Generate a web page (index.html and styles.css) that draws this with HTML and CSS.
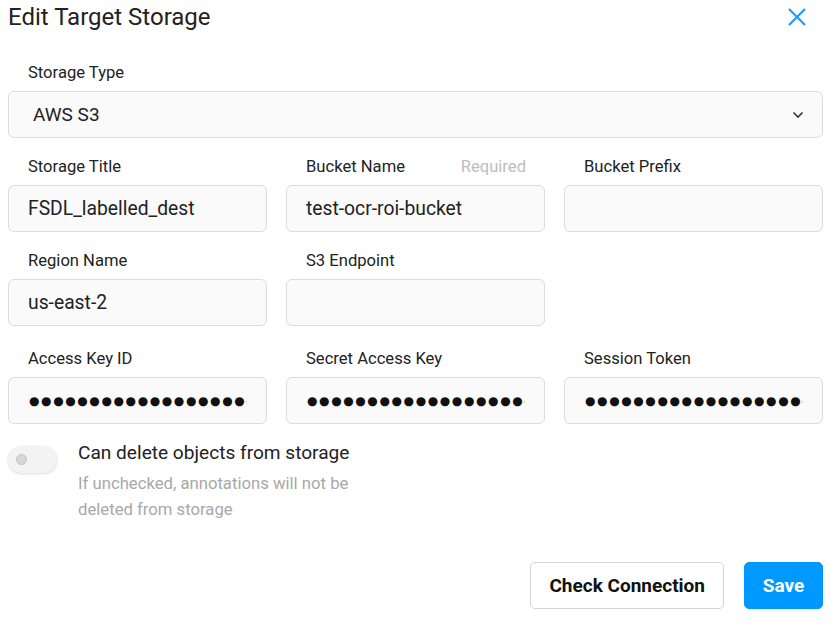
FILE: index.html
```html
<!DOCTYPE html>
<html>
<head>
<meta charset="utf-8">
<link rel="stylesheet" href="styles.css">
</head>
<body>
<div class="modal">
  <div class="header">
    <h1 class="title">Edit Target Storage</h1>
    <button class="close" aria-label="Close">
      <svg width="20" height="20" viewBox="0 0 20 20"><path d="M2 2L18 18M18 2L2 18" stroke="#1a9bff" stroke-width="2.2" fill="none"/></svg>
    </button>
  </div>

  <div class="field full">
    <div class="label">Storage Type</div>
    <div class="select">
      <span>AWS S3</span>
      <svg width="12" height="8" viewBox="0 0 12 8"><path d="M1.5 1.5L6 6L10.5 1.5" stroke="#333" stroke-width="1.6" fill="none"/></svg>
    </div>
  </div>

  <div class="grid">
    <div class="field">
      <div class="label">Storage Title</div>
      <input class="input" type="text" value="FSDL_labelled_dest">
    </div>
    <div class="field">
      <div class="label split"><span>Bucket Name</span><span class="req">Required</span></div>
      <input class="input" type="text" value="test-ocr-roi-bucket">
    </div>
    <div class="field">
      <div class="label">Bucket Prefix</div>
      <input class="input" type="text" value="">
    </div>
  </div>

  <div class="grid">
    <div class="field">
      <div class="label">Region Name</div>
      <input class="input" type="text" value="us-east-2">
    </div>
    <div class="field">
      <div class="label">S3 Endpoint</div>
      <input class="input" type="text" value="">
    </div>
  </div>

  <div class="grid row3">
    <div class="field">
      <div class="label">Access Key ID</div>
      <input class="input secret" type="text" value="●●●●●●●●●●●●●●●●●●●●●●">
    </div>
    <div class="field">
      <div class="label">Secret Access Key</div>
      <input class="input secret" type="text" value="●●●●●●●●●●●●●●●●●●●●●●">
    </div>
    <div class="field">
      <div class="label">Session Token</div>
      <input class="input secret" type="text" value="●●●●●●●●●●●●●●●●●●●●●●">
    </div>
  </div>

  <div class="toggle-row">
    <div class="toggle"><span class="knob"></span></div>
    <div class="toggle-text">
      <div class="toggle-title">Can delete objects from storage</div>
      <div class="toggle-help">If unchecked, annotations will not be<br>deleted from storage</div>
    </div>
  </div>

  <div class="actions">
    <button class="btn">Check Connection</button>
    <button class="btn primary">Save</button>
  </div>
</div>
</body>
</html>
```

FILE: styles.css
```css
* { box-sizing: border-box; }
html, body { margin: 0; padding: 0; background: #fff; }
body { font-family: Roboto, "Noto Sans", sans-serif; color: #222; }

.modal {
  width: 815px;
  margin-left: 8px;
  padding-top: 4px;
}

.header {
  display: flex;
  justify-content: space-between;
  align-items: center;
  height: 26px;
}
.title {
  margin: 0;
  font-size: 24px;
  font-weight: 400;
  line-height: 26px;
  color: #222;
}
.close {
  border: 0;
  background: none;
  padding: 0;
  margin-right: 16px;
  width: 20px;
  height: 20px;
  display: flex;
}

.field.full { margin-top: 33px; }

.label {
  font-size: 16.6px;
  line-height: 20px;
  height: 20px;
  padding-left: 20px;
  margin-bottom: 8px;
  color: #222;
  white-space: nowrap;
}
.label.split {
  display: flex;
  justify-content: space-between;
  padding-right: 19px;
}
.req { color: #bdbdbd; }

.select {
  height: 47px;
  border: 1px solid #dcdcdc;
  border-radius: 6px;
  background: #fafafa;
  display: flex;
  align-items: center;
  justify-content: space-between;
  padding: 0 18px 0 24px;
  font-size: 19px;
  color: #222;
}

.grid {
  display: grid;
  grid-template-columns: repeat(3, 259px);
  column-gap: 19px;
  margin-top: 19px;
}
.grid.row3 { margin-top: 23px; }

.input {
  display: block;
  width: 100%;
  height: 47px;
  border: 1px solid #dcdcdc;
  border-radius: 6px;
  background: #fafafa;
  padding: 0 19px;
  font-family: Roboto, "Noto Sans", sans-serif;
  font-size: 19.3px;
  color: #222;
  outline: none;
}
.input.secret {
  font-family: "DejaVu Sans", sans-serif;
  font-size: 12px;
  letter-spacing: 1.6px;
  padding-left: 20px;
  color: #111;
}

.toggle-row {
  display: flex;
  gap: 21px;
  margin-top: 22px;
}
.toggle {
  width: 49px;
  height: 27px;
  border-radius: 14px;
  background: #f3f3f3;
  box-shadow: 0 1px 3px rgba(0,0,0,0.15);
  display: flex;
  align-items: center;
  padding-left: 8px;
  flex: none;
}
.knob {
  width: 11px;
  height: 11px;
  border-radius: 50%;
  background: #d6d6d6;
  border: 1px solid #c4c4c4;
}
.toggle-title {
  font-size: 19.1px;
  line-height: 14px;
  color: #222;
}
.toggle-help {
  font-size: 16.7px;
  line-height: 26px;
  color: #a8a8a8;
  margin-top: 11px;
}

.actions {
  display: flex;
  justify-content: flex-end;
  gap: 20px;
  margin-top: 39px;
}
.btn {
  height: 47px;
  padding: 0 18px;
  border: 1px solid #d4d4d4;
  border-radius: 5px;
  background: #fff;
  font-family: Roboto, "Noto Sans", sans-serif;
  font-size: 19px;
  font-weight: 700;
  color: #111;
}
.btn.primary {
  background: #0099ff;
  border-color: #0099ff;
  color: #fff;
  width: 79px;
  padding: 0;
}
```
